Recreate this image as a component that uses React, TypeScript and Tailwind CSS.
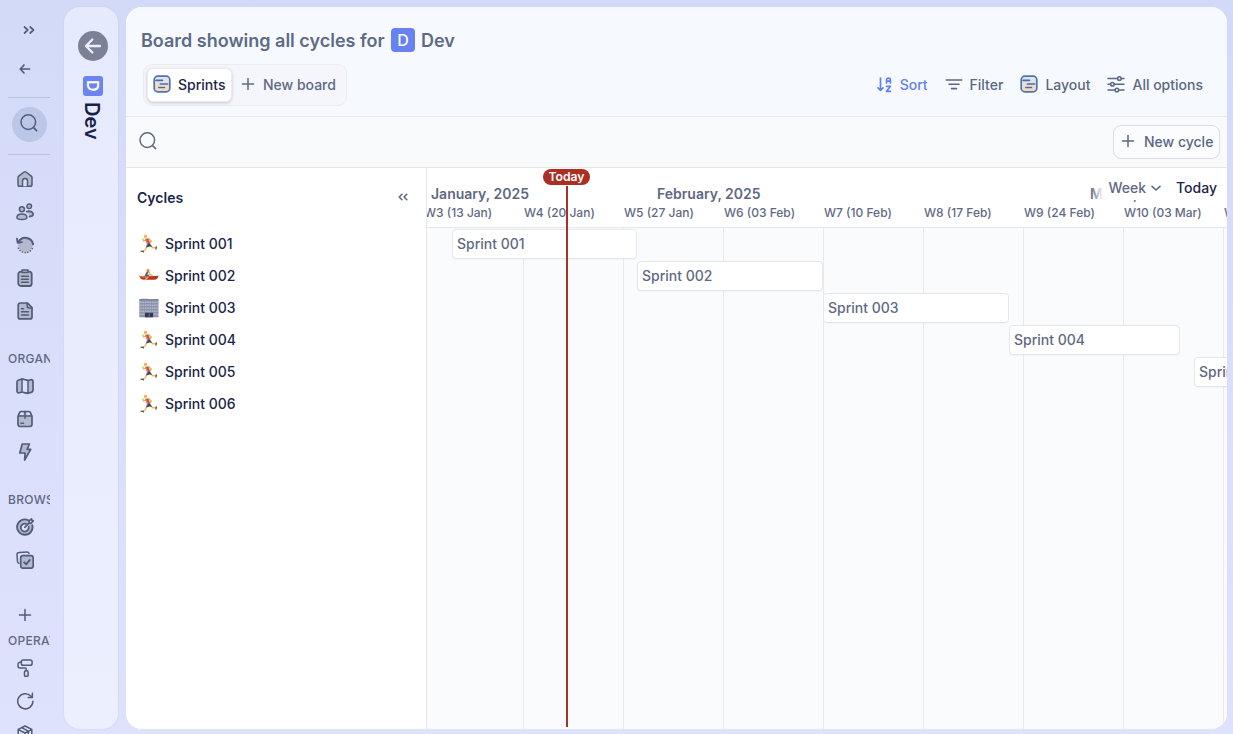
import type { ReactNode } from "react";

type IconProps = { className?: string; children?: ReactNode; stroke?: number; size?: number };

function Icon({ className = "", children, stroke = 1.5, size = 18 }: IconProps) {
  return (
    <svg
      width={size}
      height={size}
      viewBox={`0 0 ${size} ${size}`}
      fill="none"
      stroke="currentColor"
      strokeWidth={stroke}
      strokeLinecap="round"
      strokeLinejoin="round"
      className={`shrink-0 ${className}`}
    >
      {children}
    </svg>
  );
}

const TINT = "#b4b9cd";

const HomeIcon = () => (
  <Icon>
    <path d="M2 7.6c0-.6.3-1.1.7-1.5L8 2c.6-.4 1.4-.4 2 0l5.3 4.1c.4.4.7.9.7 1.5V14.500a1.800 1.800 0 0 1-1.800 1.800H3.800A1.800 1.800 0 0 1 2 14.500Z" fill={TINT} />
    <path d="M6.500 16.300V11a2.500 2.500 0 0 1 5 0v5.300" fill="#dadffa" />
  </Icon>
);
const PeopleIcon = () => (
  <Icon>
    <circle cx="5.900" cy="6.200" r="2.500" fill={TINT} />
    <path d="M.9 14.600c0-2.200 2.200-3.600 5-3.600s5 1.400 5 3.600c0 1.400-1.300 2-5 2s-5-.6-5-2Z" fill={TINT} />
    <circle cx="13.200" cy="3.300" r="2.300" fill={TINT} />
    <path d="M10.700 8.600c3.200-1 6.400.3 6.400 2.700 0 1.400-1.200 2.100-3.400 2.200" fill={TINT} strokeWidth="1.800" />
  </Icon>
);
const HistoryIcon = () => (
  <Icon>
    <circle cx="9.300" cy="9.500" r="7.300" fill={TINT} stroke="none" />
    <path d="M2.300 12.200a7.800 7.800 0 0 0 14.600-1.400" strokeDasharray=".1 2.700" />
    <path d="M2.600 5.800a7.800 7.800 0 0 1 14.500 2.500" strokeWidth="2" />
    <path d="M1 2.700l.7 4.200 4.200-.8" strokeWidth="1.800" />
  </Icon>
);
const ClipboardIcon = () => (
  <Icon>
    <rect x="2.300" y="2.600" width="13.400" height="14.400" rx="2.600" fill={TINT} strokeWidth="1.800" />
    <path d="M6 1h6v2.600H6z" fill={TINT} />
    <path d="M5.600 7.300h6.800M5.600 10.300h6.800M5.600 13.300h6.800" strokeWidth="1.600" />
  </Icon>
);
const DocIcon = () => (
  <Icon>
    <path d="M4.200 1h7.300L16 5.700v9.200a2 2 0 0 1-2 2H4.200a2 2 0 0 1-2-2V3a2 2 0 0 1 2-2Z" fill={TINT} strokeWidth="1.700" />
    <path d="M11.200 1.200v2.700a2 2 0 0 0 2 2h2.700M5.500 6.700h2M5.500 9.800h7M5.500 12.900h7" />
  </Icon>
);
const MapIcon = () => (
  <Icon>
    <path d="M6 2 2.600 3A2.200 2.200 0 0 0 1 5v9c0 1.300 1 2 2.200 1.700L6 15l6 1.300 3.200-.9A2.200 2.200 0 0 0 17 13.300V4.500c0-1.300-1-2-2.200-1.700L12 3.500Z" fill={TINT} strokeWidth="1.700" />
    <path d="m6 2 6 1.500v12.800L6 15Z" fill="#dde1fb" />
  </Icon>
);
const PackageIcon = () => (
  <Icon>
    <path d="M2 6.500 3.300 3a2 2 0 0 1 2-1.400h7.400a2 2 0 0 1 2 1.400L16 6.500v7.800a2.200 2.200 0 0 1-2.200 2.200H4.200A2.200 2.200 0 0 1 2 14.300Z" fill={TINT} strokeWidth="1.700" />
    <path d="M3.800 4.800 5 2.400h2.600l-.4 2.600ZM10.400 2.400H13l1.200 2.400h-3.400Z" fill="#dde1fb" stroke="none" />
    <path d="M2.500 6h13M9 1.500v6.800M5 13.300h2.500" />
  </Icon>
);
const BoltIcon = () => (
  <Icon>
    <path d="M6.200 1h7.200l-2.300 5.300h3.600L8.600 17l.5-7H3.800Z" fill={TINT} strokeWidth="1.700" />
  </Icon>
);
const GoalIcon = () => (
  <Icon>
    <path d="M12 2.100a7.700 7.700 0 1 0 4.300 5.200" strokeWidth="1.900" fill={TINT} />
    <path d="M10 5.800a4 4 0 1 0 2.700 3.100" strokeWidth="1.800" fill="#dde1fb" />
    <path d="m8.800 9.300 4.600-4.600M13.200 2.900 15.500.9l.4 1.500 1.300.5-2 2.200-2.100-.2Z" strokeWidth="1.700" />
  </Icon>
);
const TasksIcon = () => (
  <Icon>
    <path d="M2.800 12.200A2 2 0 0 1 1.500 10.500L1 3.600A2 2 0 0 1 3 1.500l8-.6a2 2 0 0 1 2 1.600" />
    <rect x="4.700" y="4.700" width="12.500" height="12.500" rx="2.200" fill={TINT} strokeWidth="1.700" />
    <path d="m8.200 11.300 2 2 3.600-4.400" strokeWidth="1.900" />
  </Icon>
);
const RollerIcon = () => (
  <Icon>
    <rect x="5.300" y="1" width="10.800" height="5.300" rx="1.800" />
    <path d="M5.300 3.200H4a2 2 0 0 0-2 2v1.700a2 2 0 0 0 2 2h5.200a1 1 0 0 1 1 1v1.600" />
    <rect x="8.500" y="11.800" width="3.600" height="5.500" rx="1.100" />
  </Icon>
);
const RefreshIcon = () => (
  <Icon>
    <path d="M16.200 5.200 14.800 4A7.600 7.600 0 1 0 16.900 9.300M16.400 1.200v4.300h-4.200" />
  </Icon>
);
const CubeIcon = () => (
  <Icon>
    <path d="m9 1 6.800 3.300v8.500L9 16.700l-6.800-3.900V4.300ZM2.200 4.600 9 8l6.800-3.400M9 8v8.500M5.600 2.700l6.800 3.500v3" />
  </Icon>
);
const SearchIcon = () => (
  <Icon>
    <circle cx="8.300" cy="8.100" r="7.300" />
    <path d="m13.600 13.600 3 3" />
  </Icon>
);
const PlusIcon = () => (
  <Icon size={14}>
    <path d="M7 1.500v11M1.500 7h11" />
  </Icon>
);
const BoardIcon = () => (
  <Icon>
    <defs>
      <linearGradient id="sand" x1="0" y1="0" x2="0" y2="1">
        <stop offset="0.1" stopColor="#dfe5ef" />
        <stop offset="1" stopColor="#fbd7ae" />
      </linearGradient>
    </defs>
    <rect x="1.200" y="1.200" width="15.600" height="15.600" rx="3.600" fill="url(#sand)" stroke="#4d74b8" strokeWidth="1.700" />
    <path d="M3 5.400h6.500M7.300 9h7.400M5.800 12.500h5.700" stroke="#456eb4" strokeWidth="1.600" />
  </Icon>
);
const SortIcon = () => (
  <Icon size={16}>
    <path d="M3.500 1v12M1 10.800 3.500 13.300 6 10.800M9.500 6V3a1.900 1.900 0 0 1 3.900 0v3M9.500 4.200h3.900M9.500 9.300h4l-4 5h4" stroke="#6280f5" strokeWidth="1.700" />
  </Icon>
);
const FilterIcon = () => (
  <Icon>
    <path d="M1.300 4h15.400M4 8.300h10M6.500 12.600h5" strokeWidth="1.600" />
  </Icon>
);
const OptionsIcon = () => (
  <Icon>
    <path d="M1 2.500h9.500M14.300 2.500H17M1 8.300h2.500M7.300 8.300H17M1 14h7M11.800 14H17" />
    <circle cx="12.400" cy="2.500" r="1.800" />
    <circle cx="5.400" cy="8.300" r="1.800" />
    <circle cx="9.900" cy="14" r="1.800" />
  </Icon>
);

const RunnerEmoji = () => (
  <svg width="20" height="20" viewBox="0 0 20 20" fill="none" strokeLinecap="round" strokeLinejoin="round">
    <path d="m8 12.200-2 4-2.600.9M12.500 12.500l1.300 1.400 3.300-.2" stroke="#efb43f" strokeWidth="1.200" />
    <path d="m4 4.800.5 2 2-.5M10.300 5l2 2-1.300 1.800" stroke="#efb43f" strokeWidth="1.300" />
    <path d="m6.900 5.200 2.300-.5 1.600 4.500-2 .8Z" fill="#c9574b" stroke="#c9574b" strokeWidth=".8" />
    <path d="m8.500 10.400 2.300-.7 1.900 2.900-2.300-.4-2.600 1Z" fill="#343c60" stroke="#343c60" strokeWidth=".5" />
    <ellipse cx="6.500" cy="2.600" rx="1.600" ry="2" fill="#eebc50" />
    <path d="M2 17.300h2l.6.500M17.300 12.900l-.3 2.400" stroke="#30364f" strokeWidth="1.100" />
  </svg>
);
const RowEmoji = () => (
  <svg width="20" height="20" viewBox="0 0 20 20" fill="none" strokeLinecap="round">
    <path d="M.3 9.700c1.500.7 3.500.6 6 .6 5 0 9-.2 13.200-.5-.4 2.500-2 3.900-4.300 3.900H5c-2.400 0-4.200-1.500-4.700-4Z" fill="#bb3227" />
    <path d="M1 10.200c2 .8 4 1 6 1" stroke="#e88a38" />
    <path d="m9.500 5.200 1.600 3.200 1.900 1.300" stroke="#eeb64a" strokeWidth="1.500" />
    <path d="m8.600 5.900-1.800 3.500h2.700" stroke="#55627c" strokeWidth="1.800" />
    <circle cx="9" cy="4.200" r="1.300" fill="#c99044" />
    <path d="m8.800 11.200-2.600 2.600" stroke="#edb54a" strokeWidth="1.400" />
  </svg>
);
const BuildingEmoji = () => (
  <svg width="20" height="20" viewBox="0 0 20 20">
    <path d="M2 .7h7v1H2z" fill="#a0a5b6" />
    <path d="M.3 1.300h19.200v18H.3z" fill="#8d94aa" />
    <path d="M.3 1.300h19.200v1H.3z" fill="#6f7690" />
    <path d="M1.300 4.300h17.400M1.300 7.300h17.400M1.300 10.300h17.400M1.300 13.300h17.400M1.300 16.300h17.400" stroke="#b5bbcd" strokeWidth="1.600" strokeDasharray="1.500 .8" />
    <path d="M6 14.800h8v4.500H6z" fill="#303a58" />
    <path d="M9.700 15.500h.8v3.800h-.8z" fill="#7d86a0" />
  </svg>
);

const cycles: { name: string; emoji: ReactNode }[] = [
  { name: "Sprint 001", emoji: <RunnerEmoji /> },
  { name: "Sprint 002", emoji: <RowEmoji /> },
  { name: "Sprint 003", emoji: <BuildingEmoji /> },
  { name: "Sprint 004", emoji: <RunnerEmoji /> },
  { name: "Sprint 005", emoji: <RunnerEmoji /> },
  { name: "Sprint 006", emoji: <RunnerEmoji /> },
];

const bars = [
  { name: "Sprint 001", start: 25, width: 185 },
  { name: "Sprint 002", start: 210, width: 186 },
  { name: "Sprint 003", start: 396, width: 186 },
  { name: "Sprint 004", start: 582, width: 171 },
  { name: "Sprint 005", start: 767, width: 186 },
];

const weeks = [
  "W3 (13 Jan)",
  "W4 (20 Jan)",
  "W5 (27 Jan)",
  "W6 (03 Feb)",
  "W7 (10 Feb)",
  "W8 (17 Feb)",
  "W9 (24 Feb)",
  "W10 (03 Mar)",
  "W11 (10 Mar)",
];

function NavItem({ children }: { children: ReactNode }) {
  return <button className="flex h-[33px] w-[34px] shrink-0 items-center justify-center">{children}</button>;
}

function NavLabel({ children }: { children: ReactNode }) {
  return (
    <div className="w-[42px] shrink-0 overflow-hidden text-xs leading-4 font-medium tracking-[0.3px] whitespace-nowrap text-[#5d6780]">
      {children}
    </div>
  );
}

function Sidebar() {
  return (
    <nav className="flex w-16 shrink-0 flex-col overflow-hidden pl-2 text-[#505c78]">
      <button className="mt-[13px] ml-[11px] flex h-[34px] w-5 shrink-0 items-center justify-center">
        <Icon size={12}>
          <path d="M1.500 3 4.800 6 1.500 9M7.200 3 10.500 6 7.200 9" strokeWidth="1.700" />
        </Icon>
      </button>
      <button className="mt-[5px] flex h-[34px] w-[34px] shrink-0 items-center justify-center">
        <Icon size={12}>
          <path d="M10.500 6H1.500M5 2 1.300 6 5 10" strokeWidth="1.700" />
        </Icon>
      </button>
      <div className="mt-[11px] h-px w-[42px] shrink-0 bg-[#b9c1de]" />
      <button className="mt-[9px] ml-1 flex size-[35px] shrink-0 items-center justify-center rounded-full bg-[#bcc6e7] pr-px pb-[3px]">
        <SearchIcon />
      </button>
      <div className="mt-3 h-px w-[42px] shrink-0 bg-[#b9c1de]" />
      <div className="mt-[7px] flex flex-col">
        <NavItem><HomeIcon /></NavItem>
        <NavItem><PeopleIcon /></NavItem>
        <NavItem><HistoryIcon /></NavItem>
        <NavItem><ClipboardIcon /></NavItem>
        <NavItem><DocIcon /></NavItem>
      </div>
      <div className="mt-6"><NavLabel>ORGANISE</NavLabel></div>
      <div className="mt-[2px] flex flex-col">
        <NavItem><MapIcon /></NavItem>
        <NavItem><PackageIcon /></NavItem>
        <NavItem><BoltIcon /></NavItem>
      </div>
      <div className="mt-6"><NavLabel>BROWSE</NavLabel></div>
      <div className="mt-[2px] flex flex-col">
        <NavItem><GoalIcon /></NavItem>
        <NavItem><TasksIcon /></NavItem>
      </div>
      <button className="mt-[29px] flex h-5 w-[34px] shrink-0 items-center justify-center">
        <PlusIcon />
      </button>
      <div className="mt-2"><NavLabel>OPERATE</NavLabel></div>
      <div className="mt-[2px] flex flex-col">
        <NavItem><RollerIcon /></NavItem>
        <NavItem><RefreshIcon /></NavItem>
        <NavItem><CubeIcon /></NavItem>
      </div>
    </nav>
  );
}

function SpaceRail() {
  return (
    <aside className="mt-[7px] mb-[5px] flex w-[54px] shrink-0 flex-col items-center rounded-2xl bg-linear-to-b from-[#e6eafd] to-[#ebeffe] shadow-[0_0_2px_rgba(190,198,235,0.7)]">
      <button className="mt-6 ml-1 flex size-[30px] items-center justify-center rounded-full bg-[#7b8298] text-[#eceffd]">
        <Icon size={18}>
          <path d="M16 9H2.500M8.300 2.500 2 9l6.300 6.500" strokeWidth="2.300" />
        </Icon>
      </button>
      <div className="mt-[15px] ml-1 flex size-5 items-center justify-center rounded-[3px] bg-[#6c84f2] text-[16px] leading-5 font-semibold text-white [writing-mode:vertical-rl]">
        D
      </div>
      <div className="mt-[6px] ml-px text-[20px] leading-6 font-semibold text-[#172246] [writing-mode:vertical-rl]">Dev</div>
    </aside>
  );
}

function BoardHeader() {
  return (
    <header className="flex h-[110px] shrink-0 flex-col border-b border-[#e4e8ec] bg-[#f6fafe]">
      <h1 className="mt-[21px] ml-[15px] flex h-6 items-center text-[18px] font-semibold text-[#5f6a86]">
        <span className="w-[250px] whitespace-nowrap">Board showing all cycles for</span>
        <span className="flex size-6 items-center justify-center rounded-[4px] bg-[#6882f2] text-[16px] font-medium text-white">D</span>
        <span className="ml-[6px]">Dev</span>
      </h1>
      <div className="mt-3 flex items-center justify-between pr-6 pl-[17px]">
        <div className="flex h-[42px] w-[204px] items-center rounded-[9px] border border-[#eaecf1] bg-[#f4f6fb] pl-[3px]">
          <button className="flex h-[34px] w-[85px] items-center gap-[7px] rounded-md border border-[#eceaf2] bg-white pl-[5px] text-[14px] leading-5 font-medium text-[#1b2549] shadow-[0_1px_3px_rgba(100,90,110,0.3)]">
            <span className="pb-[2px]"><BoardIcon /></span>
            Sprints
          </button>
          <button className="ml-[9px] flex items-center gap-2 text-[14px] leading-5 font-medium whitespace-nowrap text-[#5f6985]">
            <span className="pb-[2px]"><PlusIcon /></span>
            New board
          </button>
        </div>
        <div className="flex items-center text-[14px] leading-5 font-medium whitespace-nowrap text-[#5c6784]">
          <button className="flex items-center gap-[7px] text-[#6280f5]"><SortIcon />Sort</button>
          <button className="ml-[17px] flex items-center gap-[7px]"><FilterIcon />Filter</button>
          <button className="ml-[17px] flex items-center gap-[7px]"><span className="pb-[2px]"><BoardIcon /></span>Layout</button>
          <button className="ml-[17px] flex items-center gap-[7px]"><OptionsIcon />All options</button>
        </div>
      </div>
    </header>
  );
}

function SearchBar() {
  return (
    <div className="flex h-[51px] shrink-0 items-center justify-between border-b border-[#e5e8eb] bg-[#f9fafc] pr-[7px] pl-[13px] text-[#5c6784]">
      <span className="pb-[2px]"><SearchIcon /></span>
      <button className="flex h-[34px] w-[107px] items-center gap-[9px] rounded-lg border border-[#d9dce9] bg-[#fbfcfe] pl-[7px] text-[14px] leading-5 font-medium whitespace-nowrap">
        <span className="pb-[2px]"><PlusIcon /></span>
        New cycle
      </button>
    </div>
  );
}

function CycleList() {
  return (
    <section className="w-[301px] shrink-0 border-r border-[#e6e9ec] bg-white text-[14px] leading-5 text-[#1b2549]">
      <div className="flex h-[60px] items-center justify-between pr-[17px] pl-[11px]">
        <h2 className="font-semibold">Cycles</h2>
        <button className="pb-[2px] text-[#5c6784]">
          <Icon size={12}>
            <path d="M5 3.200 2.200 6 5 8.800M9.800 3.200 7 6l2.800 2.800" />
          </Icon>
        </button>
      </div>
      <ul>
        {cycles.map((c) => (
          <li key={c.name} className="flex h-8 items-center gap-[6px] pl-[13px] font-medium">
            {c.emoji}
            {c.name}
          </li>
        ))}
      </ul>
    </section>
  );
}

function Timeline() {
  return (
    <section className="relative flex min-w-0 flex-1 flex-col overflow-hidden bg-[#f9fbfc]">
      <div className="h-[60px] shrink-0 border-b border-[#e6e9ec] bg-white text-[#5f6985]">
        <div className="flex h-[36px] items-end pl-1 text-[14px] leading-5 font-semibold whitespace-nowrap">
          <span className="w-[226px]">January, 2025</span>
          <span className="w-[433px]">February, 2025</span>
          <span>March, 2025</span>
        </div>
        <div className="-ml-[3px] flex text-[12px] leading-[18px] font-medium whitespace-nowrap">
          {weeks.map((w) => (
            <span key={w} className="w-[100px] shrink-0">{w}</span>
          ))}
        </div>
      </div>
      <div className="grid min-h-0 flex-1">
        <div className="col-start-1 row-start-1 -ml-[3px] flex">
          {weeks.map((w) => (
            <div key={w} className="w-[100px] shrink-0 border-r border-[#e8eaed]" />
          ))}
        </div>
        <div className="z-10 col-start-1 row-start-1 min-w-0">
          {bars.map((b) => (
            <div key={b.name} className="flex h-8 items-center" style={{ paddingLeft: b.start }}>
              <div
                className="flex h-[30px] shrink-0 items-center rounded-[4px] border border-[#e5e8eb] bg-white pl-1 text-[14px] leading-5 font-medium text-[#5f6985] shadow-[0_1px_1px_rgba(0,0,0,0.03)]"
                style={{ width: b.width }}
              >
                {b.name}
              </div>
            </div>
          ))}
        </div>
      </div>
      <div className="absolute top-2 right-0 z-20 flex h-6 items-center bg-white pr-[10px] pl-[5px] text-[14px] leading-5 font-medium text-[#5f6985] before:absolute before:right-full before:h-6 before:w-3 before:bg-linear-to-r before:from-white/0 before:to-white">
        Week
        <Icon size={12} className="ml-1">
          <path d="M2 4.300 6 8l4-3.700" strokeWidth="1.600" />
        </Icon>
        <span className="ml-[14px] text-[#1b2549]">Today</span>
      </div>
      <div className="absolute top-[18px] bottom-[2px] left-[139px] z-20 w-[2px] bg-[#a83128]" />
      <div className="absolute top-px left-[116px] z-20 flex h-4 w-[47px] items-center justify-center rounded-full bg-[#ab2f23] text-[12.200px] font-semibold text-white">
        Today
      </div>
    </section>
  );
}

export default function App() {
  return (
    <div className="flex h-[734px] w-full overflow-hidden bg-linear-to-b from-[#d3daf7] to-[#dfe2fd] font-['Inter',sans-serif]">
      <Sidebar />
      <SpaceRail />
      <main className="mt-[7px] mr-[6px] mb-[5px] ml-2 flex min-w-0 flex-1 flex-col overflow-hidden rounded-2xl bg-white">
        <BoardHeader />
        <SearchBar />
        <div className="flex min-h-0 flex-1">
          <CycleList />
          <Timeline />
        </div>
      </main>
    </div>
  );
}
